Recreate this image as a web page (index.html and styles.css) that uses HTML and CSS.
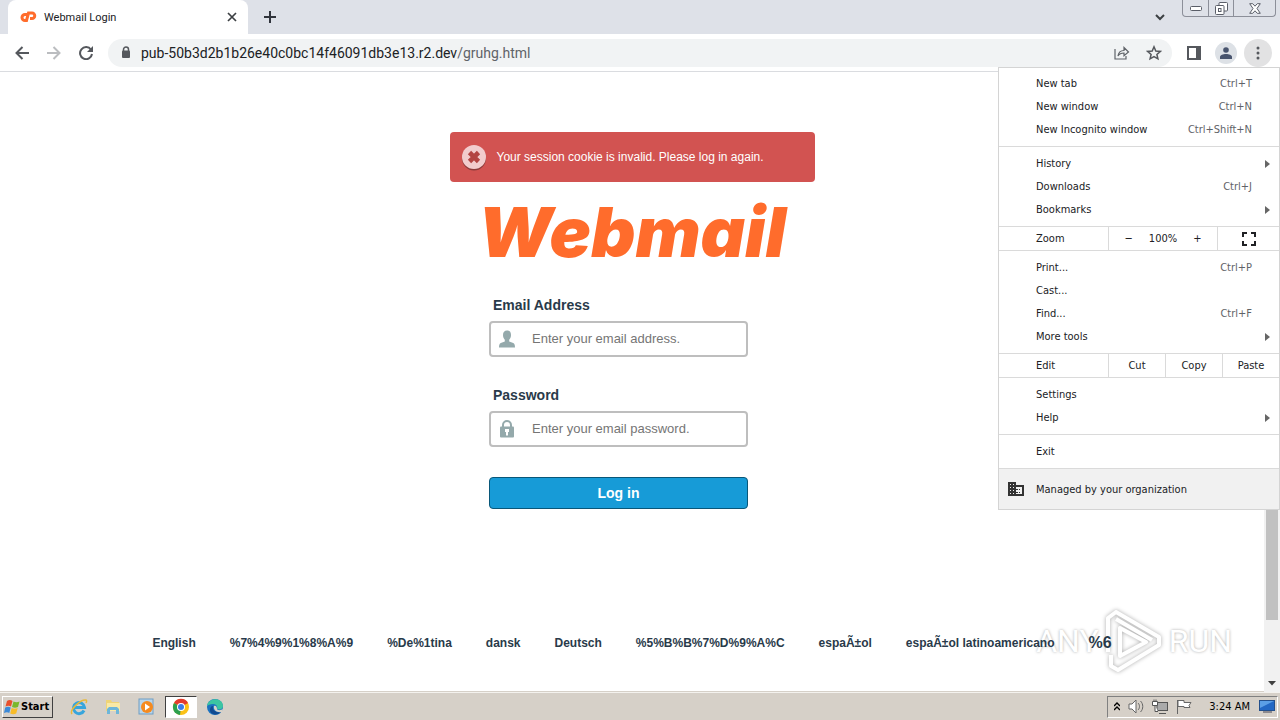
FILE: index.html
```html
<!DOCTYPE html>
<html lang="en">
<head>
    <meta charset="UTF-8">
    <meta name="viewport" content="width=device-width, initial-scale=1.0">
    <title>Webmail Login</title>
    <link rel="stylesheet" href="styles.css">
</head>
<body>
    <header class="browser">
        <div class="tabstrip">
            <div class="tab">
                <svg class="favicon" viewBox="0 0 17 12" width="17" height="12" fill="none" stroke="#ff6c2c" stroke-width="3"><path d="M7.500 3.500H5a3 3 0 0 0 0 6h1.500L8.500 2H12a2.500 2.500 0 0 1 0 5.500h-2"/></svg>
                <span class="tab-title">Webmail Login</span>
                <button class="icon-btn" aria-label="Close tab">
                    <svg viewBox="0 0 10 10" width="10" height="10" stroke="#3c4043" stroke-width="1.700"><path d="M1 1l8 8M9 1l-8 8"/></svg>
                </button>
            </div>
            <button class="icon-btn new-tab" aria-label="New tab">
                <svg viewBox="0 0 12 12" width="12" height="12" stroke="#30343c" stroke-width="2"><path d="M6 0v12M0 6h12"/></svg>
            </button>
            <button class="icon-btn tab-search" aria-label="Search tabs">
                <svg viewBox="0 0 10 7" width="10" height="7" fill="none" stroke="#3c4043" stroke-width="2"><path d="M1 1l4 4 4-4"/></svg>
            </button>
            <div class="window-buttons">
                <button aria-label="Minimize"><svg viewBox="0 0 12 5" width="12" height="5" fill="#fff" stroke="#5a5e68"><rect x=".5" y=".5" width="11" height="4" rx="1"/></svg></button>
                <button aria-label="Restore"><svg viewBox="0 0 13 13" width="13" height="13" fill="#fff" stroke="#5a5e68"><rect x="4" y=".5" width="8.500" height="8.500" rx="1"/><rect x=".5" y="3.500" width="8.500" height="9" rx="1"/><rect x="3.500" y="6.500" width="2.500" height="3"/></svg></button>
                <button aria-label="Close"><svg viewBox="0 0 12 11" width="12" height="11" fill="#fff" stroke="#5a5e68"><path d="M.7.7h3L6 3.200 8.300.7h3L8 5.500l3.300 4.800h-3L6 7.800l-2.300 2.500h-3L4 5.500z"/></svg></button>
            </div>
        </div>
        <div class="toolbar">
            <button class="icon-btn nav-btn" aria-label="Back"><svg viewBox="0 0 14 14" width="14" height="14" fill="none" stroke="#55585d" stroke-width="2"><path d="M14 7H1.500M7.500 1l-6 6 6 6"/></svg></button>
            <button class="icon-btn nav-btn" aria-label="Forward"><svg viewBox="0 0 14 14" width="14" height="14" fill="none" stroke="#bbbdc0" stroke-width="2"><path d="M0 7h12.500M6.500 1l6 6-6 6"/></svg></button>
            <button class="icon-btn nav-btn" aria-label="Reload"><svg viewBox="0 0 14 14" width="14" height="14" fill="none" stroke="#55585d" stroke-width="2"><path d="M12 3.700A6 6 0 1 0 13 8"/><path d="M14 0v6H8z" fill="#55585d" stroke="none"/></svg></button>
            <div class="omnibox">
                <svg class="lock" viewBox="0 0 10 13" width="10" height="13"><path d="M2.500 6V3.500a2.500 2.500 0 0 1 5 0V6" fill="none" stroke="#55585d" stroke-width="1.500"/><rect x="1" y="4.500" width="8" height="7.500" rx="1" fill="#55585d"/></svg>
                <span class="url">pub-50b3d2b1b26e40c0bc14f46091db3e13.r2.dev<span class="path">/gruhg.html</span></span>
                <button class="icon-btn" aria-label="Share"><svg viewBox="0 0 16 14" width="16" height="14" fill="none" stroke="#5f6368" stroke-width="1.200"><path d="M1 3v10h11v-3M4 10c.5-4 3-5.500 6-5.500V1.500L14.500 6 10 9.800V7C7.500 7 5.500 7.500 4 10z"/></svg></button>
                <button class="icon-btn" aria-label="Bookmark"><svg viewBox="0 0 16 16" width="16" height="16" fill="none" stroke="#55585d" stroke-width="1.500"><path d="M8 1.800l1.800 4.200 4.500.4-3.400 3 1 4.400L8 11.500l-3.900 2.300 1-4.400-3.400-3L6.200 6z"/></svg></button>
            </div>
            <button class="icon-btn side-panel" aria-label="Side panel"><svg viewBox="0 0 14 14" width="14" height="14"><rect x="1" y="1" width="12" height="12" fill="none" stroke="#55585d" stroke-width="2"/><path d="M9 0h5v14H9z" fill="#55585d"/></svg></button>
            <button class="icon-btn round profile" aria-label="Profile"><svg viewBox="0 0 12 12" width="12" height="12" fill="#48546e"><circle cx="6" cy="3" r="2.800"/><path d="M0 12v-2c0-2 3-3 6-3s6 1 6 3v2z"/></svg></button>
            <button class="icon-btn round more" aria-label="Menu"><svg viewBox="0 0 4 14" width="4" height="14" fill="#55585d"><circle cx="2" cy="2" r="1.500"/><circle cx="2" cy="7" r="1.500"/><circle cx="2" cy="12" r="1.500"/></svg></button>
        </div>
    </header>

    <div class="viewport">
        <main class="page">
            <div class="alert" role="alert">
                <svg viewBox="0 0 26 27" width="26" height="27"><circle cx="13" cy="14.500" r="12" fill="#8d3b3a"/><circle cx="13" cy="13" r="12" fill="#f2cccd"/><path d="M8.500 8.500l9 9M17.500 8.500l-9 9" stroke="#b34442" stroke-width="4.600"/></svg>
                <span>Your session cookie is invalid. Please log in again.</span>
            </div>
            <h1 class="logo">Webmail</h1>
            <form class="login">
                <label for="email">Email Address</label>
                <div class="field">
                    <svg viewBox="0 0 16 18" width="16" height="18" fill="#94a9ab"><path d="M4 5c0-3 1.500-4.500 4-4.500S12 2 12 5c0 2-.7 3.600-1.800 4.700v1.800l4 1.600c1.200.5 1.800 1.700 1.800 4.400H0c0-2.700.6-3.900 1.800-4.400l4-1.600V9.700C4.700 8.600 4 7 4 5z"/></svg>
                    <input id="email" type="text" placeholder="Enter your email address.">
                </div>
                <label for="password">Password</label>
                <div class="field">
                    <svg viewBox="0 0 16 18" width="16" height="18"><path d="M4 8V5a4 4 0 0 1 8 0v3" fill="none" stroke="#94a9ab" stroke-width="2"/><rect x="1" y="6.500" width="14" height="11" rx="1" fill="#94a9ab"/><path d="M6 9h4v3H9v3.500H7V12H6z" fill="#fff"/></svg>
                    <input id="password" type="password" placeholder="Enter your email password.">
                </div>
                <button class="login-btn" type="button">Log in</button>
            </form>
            <nav class="locales">
                <a href="#">English</a>
                <a href="#">%7%4%9%1%8%A%9</a>
                <a href="#">%De%1tina</a>
                <a href="#">dansk</a>
                <a href="#">Deutsch</a>
                <a href="#">%5%B%B%7%D%9%A%C</a>
                <a href="#">espaÃ±ol</a>
                <a href="#">espaÃ±ol latinoamericano</a>
                <a href="#" class="more-locales">%6</a>
            </nav>
        </main>
        <div class="scrollbar">
            <div class="thumb"></div>
            <svg viewBox="0 0 8 5" width="8" height="5" fill="#404040"><path d="M0 0h8L4 4.500z"/></svg>
        </div>
        <div class="watermark">
            <span>ANY</span>
            <svg viewBox="0 0 58 62" width="58" height="62" fill="none" stroke="#fff" stroke-width="4" stroke-linejoin="round"><path d="M3 42V8l8-6 43 25v8L13 60l-7-4V45M15 18v28l26-14zM11 9l36 21"/></svg>
            <span>RUN</span>
        </div>
    </div>

    <div class="menu" role="menu">
        <div class="group">
            <button class="item">New tab <kbd>Ctrl+T</kbd></button>
            <button class="item">New window <kbd>Ctrl+N</kbd></button>
            <button class="item">New Incognito window <kbd>Ctrl+Shift+N</kbd></button>
        </div>
        <div class="group">
            <button class="item submenu">History</button>
            <button class="item">Downloads <kbd>Ctrl+J</kbd></button>
            <button class="item submenu">Bookmarks</button>
        </div>
        <div class="split">
            <span class="split-label">Zoom</span>
            <div class="zoom">
                <button aria-label="Zoom out">−</button>
                <span>100%</span>
                <button aria-label="Zoom in">+</button>
            </div>
            <button class="fullscreen" aria-label="Full screen"><svg viewBox="0 0 14 14" width="14" height="14" fill="none" stroke="#202124" stroke-width="2"><path d="M1 5V1h4M9 1h4v4M13 9v4H9M5 13H1V9"/></svg></button>
        </div>
        <div class="group">
            <button class="item">Print... <kbd>Ctrl+P</kbd></button>
            <button class="item">Cast...</button>
            <button class="item">Find... <kbd>Ctrl+F</kbd></button>
            <button class="item submenu">More tools</button>
        </div>
        <div class="split">
            <span class="split-label">Edit</span>
            <button class="edit-btn">Cut</button>
            <button class="edit-btn">Copy</button>
            <button class="edit-btn">Paste</button>
        </div>
        <div class="group">
            <button class="item">Settings</button>
            <button class="item submenu">Help</button>
        </div>
        <div class="group">
            <button class="item">Exit</button>
        </div>
        <button class="managed">
            <svg viewBox="0 0 16 14" width="16" height="14"><path d="M0 0h8v3h8v11H0z" fill="#333"/><path d="M2 2h1v1H2zM5 2h1v1H5zM2 5h1v1H2zM5 5h1v1H5zM2 8h1v1H2zM5 8h1v1H5zM2 11h1v1H2zM5 11h1v1H5zM8 5h6v7H8v-1h2v-1H8V8h2V7H8z" fill="#f1f1f1"/><path d="M11 7h1v1h-1zM11 10h1v1h-1z" fill="#333"/></svg>
            Managed by your organization
        </button>
    </div>

    <footer class="taskbar">
        <button class="start">
            <svg viewBox="0 0 16 16" width="16" height="16"><path d="M3 2c2-1.500 4-1 5.500 0L7 7.500C5.500 6.500 3.500 6.500 1.500 7.500z" fill="#e8502c"/><path d="M9.500 2.500c2 1 4 1 6 0L14 8c-2 1-4 1-6 0z" fill="#7ab82c"/><path d="M1.200 8.500c2-1.200 4-1 5.500 0L5.300 14C4 13 2 13 0 14z" fill="#3c8ad8"/><path d="M7.700 9c2 1 4 1 6 0l-1.500 5.500c-2 1-4 1-6 0z" fill="#f8bc28"/></svg>
            Start
        </button>
        <div class="launchers">
            <button aria-label="Internet Explorer"><svg viewBox="0 0 18 18" width="18" height="18" fill="none"><path d="M14 12.500a5.500 5.500 0 1 1 .5-3H5" stroke="#37a5dc" stroke-width="3"/><path d="M2 16C-1 12 11 1 16 2c1 .5.500 2 0 3" stroke="#e9b93a" stroke-width="1.500"/></svg></button>
            <button aria-label="Explorer"><svg viewBox="0 0 18 18" width="18" height="18"><path d="M2 2h5l1 2h7v9H2z" fill="#efd477"/><path d="M3 5h13v8H3z" fill="#f9e9a6"/><path d="M3 16v-5l2-2h8l2 2v5h-3v-4H6v4z" fill="#6db6d9"/></svg></button>
            <button aria-label="Media Player"><svg viewBox="0 0 18 18" width="18" height="18"><rect x="1" y="1" width="14" height="15" fill="#b9d5ea" stroke="#6e9dc4"/><circle cx="9" cy="9" r="6" fill="#f58a1f"/><path d="M7 5.500l5 3.500-5 3.500z" fill="#fff"/></svg></button>
            <button class="active" aria-label="Chrome"><svg viewBox="0 0 18 18" width="18" height="18"><circle cx="9" cy="9" r="8" fill="#fbc116"/><path d="M9 9L2 5a8 8 0 0 1 14 0z" fill="#e33b2e"/><path d="M9 9l-1 8A8 8 0 0 1 2 5z" fill="#2da04e"/><circle cx="9" cy="9" r="4" fill="#fff"/><circle cx="9" cy="9" r="3" fill="#3b7de8"/></svg></button>
            <button aria-label="Edge"><svg viewBox="0 0 18 18" width="18" height="18"><circle cx="9" cy="9" r="8" fill="#1b72c0"/><path d="M1 8C2-1 17-1 17 8c0 3-3 4-6 3 1-3-1-5-4-5-3 0-5 1-6 2z" fill="#3cc5a2"/><path d="M7 8c-1 5 4 7 8 6-3 4-11 3-11-2 0-2 1-4 3-4z" fill="#114a90"/><path d="M8 8c2-1 3 1 3 3 1 2 4 1 6 0l-1 3c-5 1-9-2-8-6z" fill="#d6d2ca"/></svg></button>
        </div>
        <div class="tray">
            <svg viewBox="0 0 6 9" width="6" height="9" fill="none" stroke="#000" stroke-width="1.400"><path d="M0 4l3-3 3 3M0 8l3-3 3 3"/></svg>
            <svg viewBox="0 0 16 15" width="16" height="15" fill="#fff" stroke="#666"><path d="M1 5h3l4-4v13l-4-4H1z"/><path d="M10 4c2 2 2 5 0 7M12.500 2c3 3 3 8 0 11" fill="none"/></svg>
            <svg viewBox="0 0 16 15" width="16" height="15" fill="#fff" stroke="#555"><rect x="5" y="3.500" width="10.500" height="8" fill="#aaa"/><path d="M7 14.500h7M.5 2.500h5v4h-5zM2 .5v2M4 .5v2M3 6.500v6h3"/></svg>
            <svg viewBox="0 0 16 15" width="16" height="15" fill="#fff" stroke="#666"><path d="M1.500 1v14M2 1.500h6v2h7l-2 3 1 2H8v-1H2z"/></svg>
            <time>3:24 AM</time>
            <svg viewBox="0 0 16 13" width="16" height="13"><rect x=".5" y=".5" width="15" height="10" fill="#2368c4" stroke="#24508c"/><path d="M1 1h14L1 8z" fill="#5b9fe6"/><path d="M4 12h9" stroke="#445"/></svg>
        </div>
    </footer>
</body>
</html>
```
FILE: styles.css
```css
* {
    box-sizing: border-box;
}

body {
    margin: 0;
    min-height: 100vh;
    display: flex;
    flex-direction: column;
    position: relative;
    background-color: #fff;
    font-family: "DejaVu Sans Condensed", "DejaVu Sans", sans-serif;
    font-size: 11px;
    color: #202124;
}

button {
    font: inherit;
    color: inherit;
    background: none;
    border: 0;
    padding: 0;
}

svg {
    display: block;
    flex-shrink: 0;
}

.icon-btn {
    display: flex;
    align-items: center;
    justify-content: center;
    width: 16px;
    height: 28px;
}

/* Tabs */
.tabstrip {
    display: flex;
    align-items: center;
    height: 34px;
    padding: 0 4px 0 8px;
    background-color: #dee1e8;
}

.tab {
    display: flex;
    align-items: center;
    gap: 7px;
    width: 240px;
    height: 34px;
    padding: 0 8px 0 12px;
    background-color: #fff;
    border-radius: 8px 8px 0 0;
}

.tab-title {
    flex: 1;
    font-family: Roboto, sans-serif;
}

.new-tab {
    margin-left: 14px;
}

.tab-search {
    margin-left: auto;
    margin-right: 14px;
}

.window-buttons {
    display: flex;
    align-self: flex-start;
    height: 17px;
    border: 1px solid #8c8f99;
    border-top: 0;
    border-radius: 0 0 4px 4px;
}

.window-buttons button {
    display: flex;
    align-items: center;
    justify-content: center;
    width: 25px;
}

.window-buttons button + button {
    border-left: 1px solid #8c8f99;
}

.window-buttons button:last-child {
    width: 42px;
}

/* Toolbar */
.toolbar {
    display: flex;
    align-items: center;
    height: 38px;
    padding: 0 8px 0 14px;
    border-bottom: 1px solid #dadce0;
}

.nav-btn {
    margin-right: 16px;
}

.omnibox {
    flex: 1;
    display: flex;
    align-items: center;
    gap: 16px;
    height: 28px;
    margin-left: -2px;
    padding: 0 10px 0 13px;
    border-radius: 14px;
    background-color: #f1f3f4;
}

.url {
    flex: 1;
    margin-left: -6px;
    font-family: Roboto, sans-serif;
    font-size: 14px;
}

.path {
    color: #5f6368;
}

.side-panel {
    margin-left: 14px;
}

.round {
    border-radius: 50%;
}

.profile {
    width: 22px;
    height: 22px;
    margin: 0 7px 0 13px;
    background-color: #dde1e6;
}

.more {
    width: 28px;
    background-color: #e2e2e3;
}

/* Page */
.viewport {
    flex: 1;
    display: flex;
    position: relative;
}

.page {
    flex: 1;
    display: flex;
    flex-direction: column;
    align-items: center;
    padding: 60px 0 41px;
    font-family: "Liberation Sans", Arial, sans-serif;
    color: #293a4a;
}

.alert {
    display: flex;
    align-items: center;
    gap: 10px;
    width: 365px;
    height: 50px;
    padding: 0 11px;
    border-radius: 4px;
    background-color: #d25351;
    color: #fff;
    font-size: 12px;
}

.logo {
    margin: 25px 0 36px;
    font-family: Inter, Roboto, sans-serif;
    font-size: 69px;
    font-weight: 900;
    font-style: italic;
    line-height: 50px;
    color: #ff6c2c;
}

.login {
    display: flex;
    flex-direction: column;
    width: 286px;
    padding-right: 27px;
}

.login label {
    padding-left: 4px;
    font-size: 14px;
    font-weight: bold;
    line-height: 24px;
}

.field {
    display: flex;
    align-items: center;
    gap: 17px;
    height: 36px;
    margin: 4px 0 26px;
    padding-left: 8px;
    border: 2px solid #bebebe;
    border-radius: 4px;
}

.field input {
    flex: 1;
    min-width: 0;
    padding: 0 0 2px;
    border: 0;
    outline: 0;
    background: none;
    font-family: inherit;
    font-size: 13px;
    color: #293a4a;
}

.field input::placeholder {
    color: #757575;
}

.login-btn {
    height: 32px;
    margin-top: 4px;
    border: 1px solid #095779;
    border-radius: 4px;
    background-color: #179bd7;
    color: #fff;
    font-size: 14px;
    font-weight: bold;
}

.locales {
    position: relative;
    z-index: 1;
    display: flex;
    align-items: center;
    justify-content: center;
    gap: 34px;
    margin-top: auto;
    font-size: 12px;
    font-weight: bold;
    line-height: 16px;
    white-space: nowrap;
}

.locales a {
    color: inherit;
    text-decoration: none;
}

.locales .more-locales {
    font-size: 16px;
}

.scrollbar {
    display: flex;
    flex-direction: column;
    align-items: center;
    justify-content: space-between;
    width: 16px;
    padding: 16px 2px 6px;
    background-color: #f1f1f1;
}

.thumb {
    width: 12px;
    height: 89%;
    background-color: #c1c1c1;
}

.watermark {
    position: absolute;
    right: 48px;
    bottom: 20px;
    display: flex;
    align-items: center;
    gap: 6px;
    font-family: Roboto, sans-serif;
    font-size: 32px;
    line-height: 62px;
    color: #fff;
    text-shadow: 0 0 3px #aaa;
}

.watermark svg {
    filter: drop-shadow(0 0 2px #aaa);
}

/* Browser menu */
.menu {
    position: absolute;
    z-index: 2;
    top: 67px;
    right: 0;
    width: 282px;
    border: 1px solid #d4d4d4;
    background-color: #fff;
}

.group {
    padding: 5px 0;
}

.group:first-child {
    padding-top: 4px;
}

.group + .group {
    border-top: 1px solid #dadada;
}

.item {
    display: flex;
    align-items: center;
    justify-content: space-between;
    width: 100%;
    height: 23px;
    padding: 0 27px 0 37px;
}

.item kbd {
    font: inherit;
    color: #5f6368;
}

.submenu {
    padding-right: 9px;
}

.submenu::after {
    content: "";
    border: 4px solid transparent;
    border-left: 5px solid #666;
    border-right: 0;
}

.split {
    display: flex;
    height: 25px;
    border: 1px solid #dadada;
    border-width: 1px 0;
}

.split-label {
    width: 109px;
    padding-left: 37px;
    line-height: 24px;
}

.split > button,
.zoom {
    flex: 1;
    border-left: 1px solid #dadada;
}

.split .zoom {
    display: flex;
    flex: none;
    align-items: center;
    justify-content: center;
    gap: 16px;
    width: 109px;
}

.fullscreen {
    display: flex;
    align-items: center;
    justify-content: center;
}

.managed {
    display: flex;
    align-items: center;
    gap: 12px;
    width: 100%;
    height: 41px;
    padding-left: 9px;
    border-top: 1px solid #dadada;
    background-color: #f1f1f1;
}

/* Taskbar */
.taskbar {
    display: flex;
    align-items: center;
    height: 28px;
    padding: 0 2px;
    border-top: 1px solid #f4f2ee;
    background-color: #d6d0c8;
    box-shadow: 0 -1px 0 #d6d0c8;
}

.start {
    display: flex;
    align-items: center;
    gap: 1px;
    height: 22px;
    padding: 0 3px 0 1px;
    border: 1px solid;
    border-color: #fff #404040 #404040 #fff;
    font-size: 11px;
    font-weight: bold;
    color: #000;
}

.launchers {
    display: flex;
    margin-left: 10px;
    gap: 2px;
}

.launchers button {
    display: flex;
    align-items: center;
    justify-content: center;
    width: 32px;
    height: 22px;
}

.launchers .active {
    border: 1px solid;
    border-color: #404040 #fff #fff #404040;
    background-color: #fff;
}

.tray {
    display: flex;
    align-items: center;
    gap: 8px;
    height: 22px;
    margin-left: auto;
    padding: 0 2px 0 6px;
    border: 1px solid;
    border-color: #808080 #fff #fff #808080;
    color: #000;
}

.tray time {
    padding: 0 1px 0 9px;
}
```
